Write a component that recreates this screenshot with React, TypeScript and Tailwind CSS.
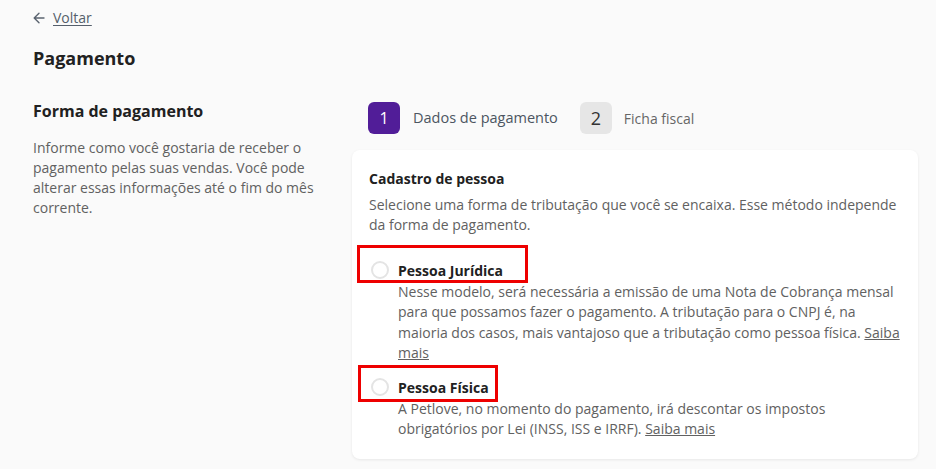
import React from "react";

function Radio() {
  return <span className="block w-[18px] h-[18px] rounded-full border-2 border-[#e4e4e4] bg-white shrink-0" />;
}

export default function App() {
  return (
    <div className="min-h-[469px] bg-[#fafafa] pl-[33px] pr-[18px] font-['Open_Sans',sans-serif] text-[#222]">
      <div className="pt-[8px] flex items-center gap-[8px] h-[28px] text-[14px] leading-[20px] text-[#555f6b]">
        <svg width="12" height="12" viewBox="0 0 12 12" fill="none" stroke="#5b6470" strokeWidth="1.4" strokeLinecap="round" strokeLinejoin="round">
          <path d="M11 6H1.5M6 1.2L1.2 6 6 10.8" />
        </svg>
        <span className="underline underline-offset-2">Voltar</span>
      </div>
      <h1 className="mt-[18px] text-[18px] leading-[24px] font-bold text-[#212121]">Pagamento</h1>

      <div className="mt-[29px] flex">
        <div className="w-[290px] mr-[29px] shrink-0">
          <h2 className="text-[16px] leading-[24px] font-bold text-[#212121]">Forma de pagamento</h2>
          <p className="mt-[15px] text-[14px] leading-[20px] text-[#616161]">
            Informe como você gostaria de receber o pagamento pelas suas vendas. Você pode alterar essas informações até o fim do mês corrente.
          </p>
        </div>

        <div className="w-[566px] shrink-0">
          <div className="mt-[3px] pl-4 flex items-center">
            <span className="w-8 h-8 rounded-md bg-[#511d98] text-white flex items-center justify-center text-[16px]">1</span>
            <span className="ml-[13px] text-[14.5px] text-[#4c5561]">Dados de pagamento</span>
            <span className="ml-[22px] w-8 h-8 rounded-md bg-[#e6e6e6] text-[#333] flex items-center justify-center text-[18px]">2</span>
            <span className="ml-[12px] text-[14px] text-[#666]">Ficha fiscal</span>
          </div>

          <div className="mt-4 bg-white rounded-lg shadow-[0_1px_3px_rgba(0,0,0,0.08)] pl-[17px] pr-[15px] pt-[19px] pb-[19px]">
            <h3 className="text-[14px] leading-[20px] font-bold text-[#212121]">Cadastro de pessoa</h3>
            <p className="mt-[6px] text-[14px] leading-[20px] text-[#616161]">
              Selecione uma forma de tributação que você se encaixa. Esse método independe da forma de pagamento.
            </p>

            <div className="relative mt-[25px]">
              <span className="absolute left-[-12px] top-[-15px] w-[171px] h-[38px] border-[3px] border-[#ee0000]" />
              <div className="flex items-center gap-[9px] h-[20px] pl-[2px]">
                <Radio />
                <span className="text-[14px] font-bold text-[#212121]">Pessoa Jurídica</span>
              </div>
              <p className="mt-[2px] ml-[29px] text-[14px] leading-[20.3px] text-[#616161]">
                Nesse modelo, será necessária a emissão de uma Nota de Cobrança mensal para que possamos fazer o pagamento. A tributação para o CNPJ é, na maioria dos casos, mais vantajoso que a tributação como pessoa física. <span className="underline">Saiba mais</span>
              </p>
            </div>

            <div className="relative mt-[14px]">
              <span className="absolute left-[-11px] top-[-12px] w-[140px] h-[37px] border-[3px] border-[#ee0000]" />
              <div className="flex items-center gap-[9px] h-[20px] pl-[2px]">
                <Radio />
                <span className="text-[14px] font-bold text-[#212121]">Pessoa Física</span>
              </div>
              <p className="mt-[2px] ml-[29px] text-[14px] leading-[20.3px] text-[#616161]">
                A Petlove, no momento do pagamento, irá descontar os impostos obrigatórios por Lei (INSS, ISS e IRRF). <span className="underline">Saiba mais</span>
              </p>
            </div>
          </div>
        </div>
      </div>
    </div>
  );
}
